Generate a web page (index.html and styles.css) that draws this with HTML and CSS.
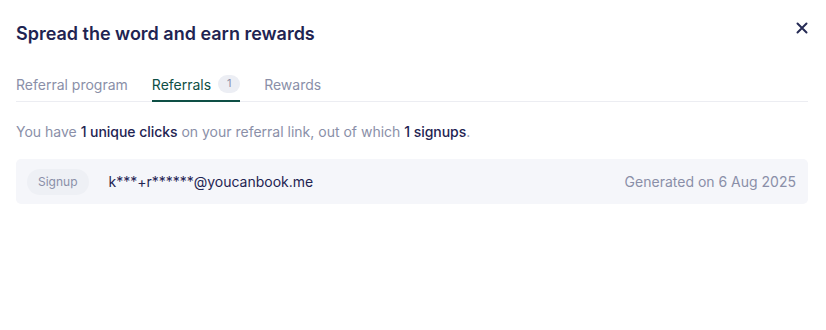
FILE: index.html
```html
<!DOCTYPE html>
<html>
<head>
<meta charset="utf-8">
<link rel="stylesheet" href="styles.css">
</head>
<body>
<div class="modal">
  <div class="header">
    <h1 class="title">Spread the word and earn rewards</h1>
    <button class="close" aria-label="Close">
      <svg width="12" height="12" viewBox="0 0 12 12"><path d="M1.5 1.5L10.5 10.5M10.5 1.5L1.5 10.5" stroke="#262b55" stroke-width="2" stroke-linecap="round"/></svg>
    </button>
  </div>
  <div class="tabs">
    <div class="tab">Referral program</div>
    <div class="tab active">Referrals <span class="badge">1</span></div>
    <div class="tab">Rewards</div>
  </div>
  <p class="summary">You have <strong>1 unique clicks</strong> on your referral link, out of which <strong>1 signups</strong>.</p>
  <div class="card">
    <span class="pill">Signup</span>
    <span class="email">k***+r******@youcanbook.me</span>
    <span class="date">Generated on 6 Aug 2025</span>
  </div>
</div>
</body>
</html>
```
FILE: styles.css
```css
* { box-sizing: border-box; }
html, body { margin: 0; padding: 0; background: #ffffff; }
body { font-family: Inter, "Noto Sans", sans-serif; color: #1f2452; }
.modal { padding: 23px 18px 0 16px; }
.header { display: flex; justify-content: space-between; align-items: flex-start; }
.title { margin: 0; font-size: 18px; line-height: 22px; font-weight: 600; color: #1f2452; letter-spacing: -0.01px; }
.close { border: 0; background: none; padding: 0; margin-top: -1px; width: 12px; height: 12px; display: flex; }
.tabs { display: flex; gap: 24px; margin-top: 31px; border-bottom: 1px solid #ecedf2; }
.tab { font-size: 14px; line-height: 17px; color: #8a8fa8; padding-bottom: 7px; border-bottom: 2px solid transparent; margin-bottom: -1px; display: flex; align-items: center; gap: 7px; }
.tab.active { color: #0e4f45; border-bottom-color: #0e4f45; }
.badge { display: inline-flex; align-items: center; justify-content: center; min-width: 22px; height: 18px; border-radius: 9px; background: #eceef4; color: #8a8fa8; font-size: 11px; margin-top: -2px; }
.summary { margin: 21px 0 0; font-size: 14px; line-height: 17px; color: #8a8fa8; }
.summary strong { font-weight: 500; color: #1f2452; letter-spacing: -0.05px; }
.card { margin-top: 19px; height: 45px; background: #f5f6fa; border-radius: 5px; display: flex; align-items: center; padding: 0 12px 0 11px; }
.pill { display: inline-flex; align-items: center; justify-content: center; height: 26px; padding: 0 11px; border-radius: 13px; background: #eef0f5; color: #8a8fa8; font-size: 12px; }
.email { margin-left: 20px; font-size: 14px; color: #1f2452; }
.date { margin-left: auto; font-size: 14px; color: #8a8fa8; }
```
